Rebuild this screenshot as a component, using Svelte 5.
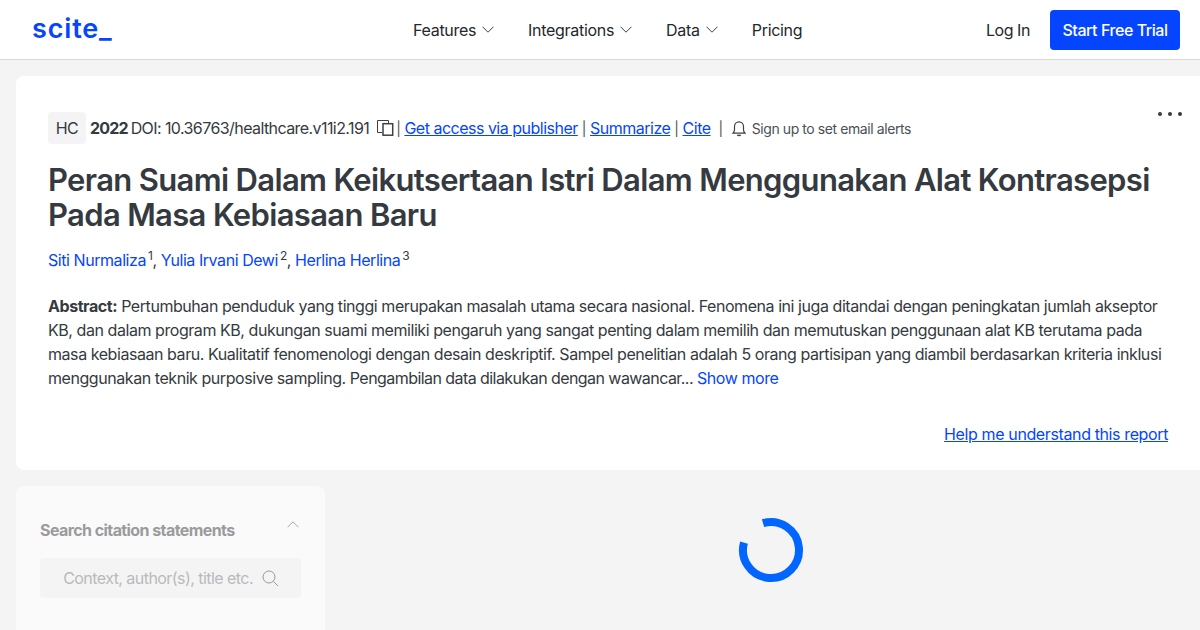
<script>
  const navItems = [
    { label: 'Features', caret: true },
    { label: 'Integrations', caret: true },
    { label: 'Data', caret: true },
    { label: 'Pricing', caret: false }
  ];
</script>

<div class="page">
  <header class="topbar">
    <div class="logo">scite<span class="under">_</span></div>
    <nav class="nav">
      {#each navItems as item}
        <span class="navitem">
          {item.label}
          {#if item.caret}
            <svg width="12" height="7" viewBox="0 0 12 7" fill="none" stroke="#3c4043" stroke-width="1"><path d="M.5.700L6 6.200 11.500.700"/></svg>
          {/if}
        </span>
      {/each}
    </nav>
    <div class="actions">
      <span class="login">Log In</span>
      <span class="trial">Start Free Trial</span>
    </div>
  </header>

  <main class="main">
    <section class="card">
      <div class="meta">
        <span class="badge">HC</span>
        <b class="year">2022</b>
        <span class="doi">DOI: 10.36763/healthcare.v11i2.191</span>
        <svg class="copy" width="17" height="16" viewBox="0 0 17 16" fill="none" stroke="#3c4043"><path d="M5 12.500H.5V.5H11.500V3" stroke-width="1"/><rect x="6" y="3.700" width="9.700" height="11.500" stroke-width="1.500"/></svg>
        <span class="sep first">|</span>
        <a href="#a">Get access via publisher</a>
        <span class="sep">|</span>
        <a href="#a">Summarize</a>
        <span class="sep">|</span>
        <a href="#a">Cite</a>
        <span class="sep wide">|</span>
        <svg class="bell" width="14" height="17" viewBox="0 0 14 17" fill="none" stroke="#3c4043" stroke-width="1.200"><path d="M1 13.200c1-1 1.500-1.600 1.500-3.400V6.500C2.500 3.800 4.500 1.800 7 1.800s4.500 2 4.500 4.700v3.300c0 1.800.5 2.400 1.500 3.400z"/><path d="M5.500 14.800c.3 1 2.700 1 3 0" stroke-width="1.500"/></svg>
        <span class="alerts">Sign up to set email alerts</span>
      </div>
      <svg class="dots" width="24" height="4" viewBox="0 0 24 4" fill="#353a40"><circle cx="2" cy="2" r="2"/><circle cx="12" cy="2" r="2"/><circle cx="22" cy="2" r="2"/></svg>

      <h1>Peran Suami Dalam Keikutsertaan Istri Dalam Menggunakan Alat Kontrasepsi Pada Masa Kebiasaan Baru</h1>

      <p class="authors">
        <a href="#a">Siti Nurmaliza</a><sup>1</sup>, <a href="#a">Yulia Irvani Dewi</a><sup>2</sup>, <a href="#a">Herlina Herlina</a><sup>3</sup>
      </p>

      <p class="abstract"><b>Abstract:</b> Pertumbuhan penduduk yang tinggi merupakan masalah utama secara nasional. Fenomena ini juga ditandai dengan peningkatan jumlah akseptor KB, dan dalam program KB, dukungan suami memiliki pengaruh yang sangat penting dalam memilih dan memutuskan penggunaan alat KB terutama pada masa kebiasaan baru. Kualitatif fenomenologi dengan desain deskriptif. Sampel penelitian adalah 5 orang partisipan yang diambil berdasarkan kriteria inklusi menggunakan teknik purposive sampling. <span class="tail">Pengambilan data dilakukan dengan wawancar...</span> <a class="more" href="#a">Show more</a></p>

      <div class="help"><a href="#a">Help me understand this report</a></div>
    </section>

    <div class="lower">
      <aside class="side">
        <div class="sidehead">
          <span>Search citation statements</span>
          <svg width="12" height="7" viewBox="0 0 12 7" fill="none" stroke="#3c4043" stroke-width="1"><path d="M.5 6.300L6 .8l5.500 5.500"/></svg>
        </div>
        <div class="search">
          <span class="ph">Context, author(s), title etc.</span>
          <svg width="17" height="17" viewBox="0 0 17 17" fill="none" stroke="#3c4043" stroke-width="1"><circle cx="7" cy="7" r="6"/><path d="M11.500 11.500L16 16"/></svg>
        </div>
      </aside>
      <div class="spinwrap">
        <svg width="66" height="66" viewBox="0 0 66 66" fill="none"><path d="M25 6.200A28 28 0 1 1 6 25.600" stroke="#0066ff" stroke-width="8"/></svg>
      </div>
    </div>
  </main>
</div>

<style>
  :global(body) { margin: 0; background: #f4f4f4; }
  .page {
    width: 1200px; height: 630px; overflow: hidden; background: #f4f4f4;
    font-family: Inter, "Liberation Sans", sans-serif; color: #353a40;
    font-size: 16px; letter-spacing: -0.44px;
  }
  a { color: #0545ff; }
  .topbar {
    height: 59px; background: #fff; border-bottom: 1px solid #d9d9d9;
    display: flex; align-items: center; padding: 0 20px 0 32px;
  }
  .logo { color: #0545ff; font-size: 27px; font-weight: 600; letter-spacing: 0.85px; width: 381px; line-height: 1; margin-top: -2px; }
  .nav { display: flex; gap: 34px; flex: 1; letter-spacing: -0.3px; }
  .navitem { display: flex; align-items: center; gap: 6px; color: #24272b; }
  .actions { display: flex; align-items: center; gap: 20px; }
  .login { color: #24272b; }
  .trial {
    background: #0545ff; color: #fff; height: 40px; width: 130px; justify-content: center; border-radius: 4px;
    display: flex; align-items: center; font-weight: 500;
  }
  .main { padding: 16px 0 0 16px; }
  .card {
    position: relative; background: #fff; border-radius: 8px 0 0 8px; height: 394px;
    box-sizing: border-box; padding: 36px 32px 0;
  }
  .meta { display: flex; align-items: center; height: 32px; font-size: 16px; white-space: nowrap; }
  .meta a { letter-spacing: -0.5px; }
  .badge {
    width: 38px; height: 32px; background: #f4f4f4; border-radius: 4px;
    display: flex; align-items: center; justify-content: center; margin-right: 4px;
  }
  .year { font-weight: 700; margin-right: 3px; letter-spacing: -0.85px; }
  .doi { letter-spacing: -0.58px; }
  .copy { margin: 0 2px 0 8px; }
  .sep { margin: 0 4px; font-size: 14px; color: #4b5056; }
  .sep.first { margin: 0 4px 0 0; }
  .sep.wide { margin: 0 9px 0 8px; }
  .bell { margin-right: 6px; }
  .alerts { font-size: 14px; color: #4b5056; letter-spacing: -0.42px; }
  .dots { position: absolute; top: 36px; right: 18px; }
  h1 {
    margin: 18px 0 0; padding-top: 1px; font-size: 31px; line-height: 34.5px; font-weight: 600;
    letter-spacing: -0.66px; color: #353a40; width: 1120px;
  }
  .authors { margin: 16px 0 0; line-height: 24px; }
  .authors a { text-decoration: none; }
  sup { font-size: 12px; line-height: 0; margin-left: 2px; }
  .abstract { margin: 22px 0 0; line-height: 24px; width: 1120px; }
  .abstract b { font-weight: 700; }
  .tail { letter-spacing: -0.56px; }
  .more { text-decoration: none; }
  .help { text-align: right; margin-top: 34px; letter-spacing: -0.38px; }
  .lower { display: flex; margin-top: 16px; }
  .side {
    width: 309px; height: 200px; box-sizing: border-box; padding: 32px 24px;
    background: #fafafa; border-radius: 8px; flex-shrink: 0;
  }
  .sidehead {
    display: flex; justify-content: space-between; font-weight: 700; color: #9a9b9d;
    height: 24px; line-height: 24px; letter-spacing: -0.58px;
  }
  .sidehead svg { opacity: 0.45; margin-top: 3px; margin-right: 2px; }
  .search {
    margin-top: 16px; height: 40px; background: #f4f4f4; border-radius: 4px;
    display: flex; align-items: center; justify-content: flex-end; gap: 9px; padding-right: 22px; color: #b9babc; letter-spacing: -0.55px;
  }
  .search svg { opacity: 0.5; }
  .spinwrap { flex: 1; display: flex; justify-content: center; padding-top: 31px; padding-left: 17px; }
</style>
